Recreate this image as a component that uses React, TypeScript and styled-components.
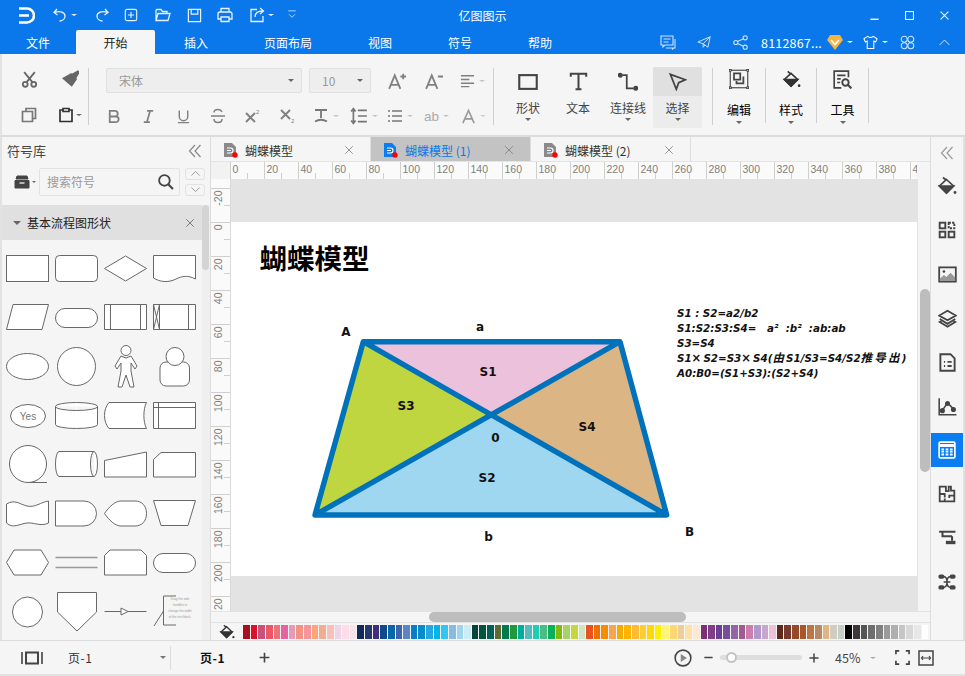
import * as React from "react"
import styled, { createGlobalStyle } from "styled-components"

const FONT = `"Noto Sans CJK SC", "Noto Sans", sans-serif`

const Global = createGlobalStyle`
  html, body { margin: 0; padding: 0; background: #f5f5f5; }
  body { font-family: ${FONT}; overflow: hidden; }
`

const Shell = styled.div`
  width: 965px;
  height: 676px;
  display: flex;
  flex-direction: column;
  overflow: hidden;
  background: #f5f5f5;
`

/* ---------- icons ---------- */

const Svg = styled.svg<{ $c?: string }>`
  display: block;
  flex: none;
  fill: none;
  stroke: ${p => p.$c || "currentColor"};
  color: ${p => p.$c || "currentColor"};
`

type IcoProps = { s?: number; c?: string; w?: number; children?: React.ReactNode }
const Ico = ({ s = 16, c, w = 1.3, children }: IcoProps) => (
  <Svg $c={c} width={s} height={s} viewBox="0 0 16 16" strokeWidth={w}>{children}</Svg>
)

const Caret = styled.span<{ $c?: string; $s?: number }>`
  display: block;
  flex: none;
  width: 0;
  height: 0;
  border-left: ${p => p.$s || 3.5}px solid transparent;
  border-right: ${p => p.$s || 3.5}px solid transparent;
  border-top: ${p => (p.$s || 3.5) * 0.9}px solid ${p => p.$c || "#666"};
`

const Logo = () => (
  <Svg width="16" height="17" viewBox="0 0 16 17" $c="#fff" strokeWidth={2.6}>
    <path d="M0 1.5H8A7 7 0 0 1 8 15.5H0M0 8.5H10" />
  </Svg>
)
const PaintBucket = ({ s = 20, c = "#444" }: { s?: number; c?: string }) => (
  <Svg width={s} height={s} viewBox="0 0 20 20" $c={c} strokeWidth={1.7}>
    <path d="M6 1.5L9 4M9.5 3.5L16.5 10L9.5 17L2.5 10Z" />
    <path d="M2.5 10H16.5L9.5 17Z" fill={c} />
    <circle cx="18" cy="16.5" r="1.4" fill={c} stroke="none" />
  </Svg>
)

/* ---------- title bar ---------- */

const TitleBar = styled.div`
  height: 30px;
  flex: none;
  background: #0a78ea;
  color: #fff;
  display: grid;
  grid-template-columns: 1fr auto 1fr;
  align-items: center;
`
const Quick = styled.div`
  display: flex;
  align-items: center;
  padding-left: 19px;
`
const QuickBtn = styled.span<{ $w: number }>`
  width: ${p => p.$w}px;
  flex: none;
  display: flex;
  align-items: center;
  justify-content: center;
  gap: 3px;
  opacity: 0.9;
`
const AppTitle = styled.div`
  font-size: 12px;
`
const WinBtns = styled.div`
  display: flex;
  justify-content: flex-end;
  align-items: center;
  padding-right: 3px;
`
const WinBtn = styled.span`
  width: 35px;
  display: flex;
  justify-content: center;
`

/* ---------- menu bar ---------- */

const MenuBar = styled.div`
  height: 24px;
  flex: none;
  background: #0a78ea;
  display: flex;
  align-items: stretch;
`
const MenuTab = styled.div<{ $w: number; $on?: boolean }>`
  width: ${p => p.$w}px;
  display: flex;
  align-items: center;
  justify-content: center;
  font-size: 12px;
  color: ${p => (p.$on ? "#222" : "#fff")};
  background: ${p => (p.$on ? "#f5f5f5" : "transparent")};
  border-radius: 2px 2px 0 0;
`
const MenuRight = styled.div`
  margin-left: auto;
  display: flex;
  align-items: center;
  color: #cfe4fb;
`
const MenuIcon = styled.span<{ $w: number }>`
  width: ${p => p.$w}px;
  display: flex;
  justify-content: center;
  align-items: center;
  gap: 4px;
`
const UserName = styled.span`
  font-size: 12.5px;
  color: #fff;
  width: 60px;
  margin-left: 3px;
  letter-spacing: 0.2px;
`

/* ---------- ribbon ---------- */

const Ribbon = styled.div`
  height: 83px;
  flex: none;
  box-sizing: border-box;
  background: #f5f5f5;
  border-left: 2px solid #e2e2e2;
  border-bottom: 2px solid #dcdcdc;
  display: flex;
  align-items: flex-start;
`
const Clip = styled.div`
  width: 86px;
  padding: 7px 0 0 6.5px;
  box-sizing: border-box;
  display: grid;
  grid-template-columns: 41px 41px;
  grid-auto-rows: 36px;
  color: #555;
`
const ClipCell = styled.div`
  display: flex;
  align-items: center;
  justify-content: center;
  gap: 2px;
`
const RibbonRule = styled.div<{ $h?: number }>`
  width: 1px;
  height: ${p => p.$h || 57}px;
  margin-top: 14px;
  background: #cfcfcf;
  flex: none;
`
const FontGroup = styled.div`
  width: 404px;
  padding-top: 14px;
  box-sizing: border-box;
  color: #808080;
`
const FontRow1 = styled.div`
  display: flex;
  align-items: center;
  height: 25px;
  padding-left: 17px;
`
const Select = styled.div<{ $w: number }>`
  width: ${p => p.$w}px;
  flex: none;
  height: 25px;
  box-sizing: border-box;
  margin-right: 7px;
  background: #eeeeee;
  border: 1px solid #e0e0e0;
  border-radius: 2px;
  display: flex;
  align-items: center;
  justify-content: space-between;
  padding: 0 7px 0 12px;
  font-size: 12px;
  color: #999;
`
const Cell = styled.span<{ $w: number }>`
  width: ${p => p.$w}px;
  flex: none;
  display: flex;
  align-items: center;
  justify-content: center;
  gap: 4px;
`
const FontRow2 = styled.div`
  display: flex;
  align-items: center;
  height: 30px;
  margin-top: 8px;
  padding-left: 6.5px;
  color: #808080;
`
const Ab = styled.span`
  font: 13.5px "Liberation Sans", sans-serif;
  color: #aaa;
`
const Tools = styled.div`
  display: flex;
  padding: 13px 10px 0 9px;
`
const Big = styled.div<{ $w?: number; $on?: boolean }>`
  width: ${p => p.$w || 50}px;
  height: 61px;
  display: flex;
  flex-direction: column;
  align-items: center;
  border-radius: 2px;
  background: ${p => (p.$on ? "#ececec" : "transparent")};
  overflow: hidden;
`
const BigIcon = styled.div<{ $on?: boolean }>`
  height: 29px;
  align-self: stretch;
  display: flex;
  align-items: center;
  justify-content: center;
  background: ${p => (p.$on ? "#e0e0e0" : "transparent")};
  color: #444;
`
const BigLabel = styled.div`
  margin-top: 3px;
  font-size: 12px;
  line-height: 17px;
  color: #444;
  white-space: nowrap;
`
const BigCaret = styled.div`
  margin-top: 2px;
`
const SmallTool = styled.div<{ $w: number }>`
  width: ${p => p.$w}px;
  padding-top: 13px;
  display: flex;
  flex-direction: column;
  align-items: center;
  color: #444;
`
const SmallIcon = styled.div`
  height: 24px;
  display: flex;
  align-items: center;
`
const SmallLabel = styled.div`
  margin-top: 10px;
  font-size: 12px;
  line-height: 17px;
  color: #000;
`
const SmallCaret = styled.div`
  margin-top: 3px;
`

/* ---------- main ---------- */

const Main = styled.div`
  flex: 1;
  min-height: 0;
  display: flex;
  border-left: 2px solid #e2e2e2;
`

/* left panel */
const Library = styled.aside`
  width: 208px;
  flex: none;
  display: flex;
  flex-direction: column;
  border-right: 1px solid #dcdcdc;
`
const LibHead = styled.div`
  height: 27px;
  display: flex;
  align-items: center;
  justify-content: space-between;
  padding: 0 7px 0 5px;
  font-size: 13px;
  color: #444;
`
const SearchRow = styled.div`
  display: flex;
  align-items: center;
  height: 29px;
  padding-left: 12px;
  margin-top: 3px;
`
const Drawer = styled.span`
  display: flex;
  align-items: center;
  gap: 2px;
  width: 25px;
`
const SearchBox = styled.div`
  width: 141px;
  height: 28px;
  box-sizing: border-box;
  border: 1px solid #e2e2e2;
  border-radius: 2px;
  display: flex;
  align-items: center;
  justify-content: space-between;
  padding: 0 5px 0 7px;
  font-size: 12px;
  color: #999;
`
const Spin = styled.div`
  margin-left: 5px;
  display: flex;
  flex-direction: column;
  gap: 4px;
`
const SpinBtn = styled.span`
  width: 20px;
  height: 12px;
  box-sizing: border-box;
  border: 1px solid #e2e2e2;
  border-radius: 3px;
  display: flex;
  align-items: center;
  justify-content: center;
`
const LibBody = styled.div`
  margin-top: 9px;
  flex: 1;
  min-height: 0;
  display: flex;
  overflow: hidden;
`
const LibList = styled.div`
  width: 200px;
  flex: none;
`
const SectionHead = styled.div`
  height: 35px;
  background: #e0e0e0;
  display: flex;
  align-items: center;
  padding: 0 7px 0 11px;
  gap: 6px;
  font-size: 12px;
  color: #222;
`
const CloseX = styled.span`
  margin-left: auto;
  display: flex;
`
const ShapeGrid = styled.div`
  margin: 3.5px 0 0 0.5px;
  display: grid;
  grid-template-columns: repeat(4, 49px);
  grid-auto-rows: 49px;
`
const ShapeSvg = styled.svg`
  display: block;
  fill: #fff;
  stroke: #686868;
  stroke-width: 1;
`
const LibTrack = styled.div`
  width: 8px;
  background: #efefef;
`
const LibThumb = styled.div`
  height: 65px;
  width: 7px;
  background: #d4d4d4;
  border-radius: 4px;
`

/* centre */
const Center = styled.section`
  flex: 1;
  min-width: 0;
  display: flex;
  flex-direction: column;
`
const DocTabs = styled.div`
  height: 25px;
  flex: none;
  display: flex;
  background: #f5f5f5;
`
const DocTab = styled.div<{ $on?: boolean }>`
  width: 159px;
  margin-right: 1px;
  box-sizing: border-box;
  padding: 1px 16px 0 12px;
  display: flex;
  align-items: center;
  gap: 7px;
  font-size: 12px;
  color: ${p => (p.$on ? "#0a78ea" : "#333")};
  background: ${p => (p.$on ? "#c3c3c3" : "#f5f5f5")};
  box-shadow: 1px 0 0 #dedede;
`
const RulerTop = styled.div`
  height: 17px;
  flex: none;
  display: flex;
  border-top: 1px solid #e4e4e4;
  margin-top: -1px;
`
const Corner = styled.div`
  width: 19px;
  flex: none;
  background: #f2f2f2;
`
const RulerSvg = styled.svg`
  display: block;
  background: #fafafa;
  flex: none;
`
const TopFill = styled.div`
  flex: 1;
  background: #f5f5f5;
`
const Work = styled.div`
  height: 432px;
  flex: none;
  display: flex;
`
const Canvas = styled.div`
  width: 687px;
  flex: none;
  background: #e3e3e3;
  padding-top: 43px;
  box-sizing: border-box;
  border-left: 1px solid #dadada;
`
const Page = styled.div`
  height: 354px;
  background: #fff;
  position: relative;
`
const PageTitle = styled.h1`
  position: absolute;
  left: 28.5px;
  top: 16px;
  margin: 0;
  font-size: 27.5px;
  line-height: 38px;
  font-weight: 700;
  color: #000;
`
const Diagram = styled.svg`
  position: absolute;
  left: 69px;
  top: 98px;
`
const DiagramText = styled.text`
  font: bold 12px "DejaVu Sans", ${FONT};
  fill: #111;
  text-anchor: middle;
  dominant-baseline: central;
`
const Formula = styled.div`
  position: absolute;
  left: 446px;
  top: 84px;
  font: italic bold 10.3px/15.1px "DejaVu Sans", "Noto Sans CJK SC", sans-serif;
  color: #111;
  white-space: pre;
`
const Wide = styled.span`
  font-size: 11.5px;
  line-height: 14px;
  letter-spacing: 2.2px;
`
const VScroll = styled.div`
  flex: 1;
  background: #f5f5f5;
  padding: 110px 0 0 2px;
  border-left: 1px solid #e2e2e2;
`
const VThumb = styled.div`
  width: 10px;
  height: 183px;
  border-radius: 5px;
  background: #bdbdbd;
`
const HScrollRow = styled.div`
  height: 12px;
  flex: none;
  box-sizing: border-box;
  display: flex;
  align-items: center;
  padding-left: 218px;
  background: #f5f5f5;
  border-top: 1px solid #e2e2e2;
  border-bottom: 1px solid #e2e2e2;
`
const HThumb = styled.div`
  width: 257px;
  height: 10px;
  flex: none;
  border-radius: 5px;
  background: #bdbdbd;
`
const Palette = styled.div`
  flex: 1;
  display: flex;
  align-items: center;
`
const PalIcon = styled.div`
  width: 32px;
  flex: none;
  display: flex;
  justify-content: center;
  color: #444;
`
const Swatches = styled.div`
  display: flex;
  gap: 1px;
`
const Swatch = styled.span<{ $c: string }>`
  display: block;
  width: 6.64px;
  flex: none;
  height: 14px;
  background: ${p => p.$c};
`

/* right rail */
const Rail = styled.aside`
  width: 32px;
  flex: none;
  border-left: 1px solid #dcdcdc;
  border-right: 2px solid #e2e2e2;
  display: flex;
  flex-direction: column;
  color: #444;
`
const RailTop = styled.div`
  height: 27px;
  box-sizing: border-box;
  display: flex;
  align-items: center;
  justify-content: center;
  padding-top: 4px;
`
const RailBtn = styled.div`
  height: 44px;
  display: flex;
  align-items: center;
  justify-content: center;
`
const RailOn = styled(RailBtn)`
  height: 34px;
  margin: 5px 0;
  background: #0a7df2;
  color: #fff;
`

/* status */
const Status = styled.footer`
  height: 36px;
  flex: none;
  box-sizing: border-box;
  border-top: 1px solid #dcdcdc;
  border-bottom: 2px solid #e2e2e2;
  display: flex;
  align-items: center;
  font-size: 12px;
  color: #333;
`
const PageIcon = styled.span`
  width: 68px;
  padding-left: 21px;
  box-sizing: border-box;
`
const PageName = styled.span`
  width: 92px;
  letter-spacing: 0.5px;
`
const StatusRule = styled.span`
  width: 1px;
  height: 24px;
  margin: 0 29px 0 4px;
  background: #dcdcdc;
`
const PageTab = styled.span`
  width: 57.5px;
  font-weight: 700;
  color: #111;
  letter-spacing: 0.5px;
`
const Zoom = styled.div`
  margin-left: auto;
  display: flex;
  align-items: center;
  padding-right: 31px;
  color: #444;
`
const PlayWrap = styled.span`
  margin-right: 4px;
`
const Slider = styled.span`
  width: 82px;
  height: 5px;
  border-radius: 3px;
  background: #dedede;
  display: flex;
  align-items: center;
  padding-left: 5.5px;
  box-sizing: border-box;
`
const Knob = styled.span`
  display: block;
  width: 11px;
  height: 11px;
  box-sizing: border-box;
  flex: none;
  background: #fff;
  border: 2px solid #c4c4c4;
  border-radius: 50%;
`
const Percent = styled.span`
  width: 44px;
  padding-left: 9px;
  box-sizing: border-box;
  font-size: 12.5px;
`
const ZoomCaret = styled.span`
  margin-right: 10px;
`

/* ---------- data ---------- */

const COLORS = [
  "#a90f1f", "#d9112b", "#c5547d", "#ea5766", "#ee7277", "#e8629f", "#e59ab8", "#f19285", "#f4949c", "#ffa47a", "#efad92", "#f7c0bb", "#ebd5e7", "#ffdce9", "#fce1e8",
  "#12295a", "#27386f", "#432d7a", "#0e4a8a", "#0767a8", "#3f64ae", "#5a86c4", "#0a7ecb", "#0a8ccb", "#2ba7df", "#00b4ef", "#35c5f5", "#8ab9e4", "#a0d5ef", "#cdebf5",
  "#05443a", "#00563a", "#006158", "#5c6b33", "#007a4d", "#22973f", "#00ae9c", "#54bcc0", "#1fcdb0", "#4bbd84", "#09b057", "#85b80f", "#a8d268", "#c4d643", "#cce6c5",
  "#e85320", "#f26f00", "#f68c00", "#f8a350", "#f5ab00", "#ffb400", "#ffbb33", "#fecd33", "#ffd800", "#fff000", "#fff47a", "#ffd670", "#ecce9b", "#ffdfa8", "#fde8d2",
  "#7b2f74", "#833d87", "#6a4096", "#754f9b", "#9367a5", "#a25b8c", "#cd7cae", "#ae98cc", "#c7a7cb", "#edc1d9",
  "#5e2a17", "#773a2c", "#94492a", "#a8572a", "#bc7642", "#b88965", "#dfb682", "#d2cbc2", "#c5cfc6",
  "#000000", "#3c3838", "#555555", "#6e6e6e", "#808080", "#9a9a9a", "#afafaf", "#c5c5c5", "#d8d8d8", "#e8e8e8", "#ffffff",
]

const SHAPES: React.ReactNode[] = [
  <rect x="3.5" y="11.5" width="42" height="26" />,
  <rect x="3.5" y="11.5" width="42" height="26" rx="4" />,
  <path d="M3.5 24.5L24.5 12L45.5 24.5L24.5 37Z" />,
  <path d="M3.5 11.5H45.5V35C38 31 32 32 26 35C18 39 10 38 3.5 34Z" />,

  <path d="M10 11.5H45.5L39 36.5H3.5Z" />,
  <rect x="3.5" y="15.5" width="42" height="19" rx="9.5" />,
  <path d="M3.5 11.5H45.5V36.5H3.5ZM9.5 11.5V36.5M39.5 11.5V36.5" />,
  <path d="M3.5 11.5H45.5V36.5H3.5ZM9.5 11.5V36.5M38.5 11.5V36.5M3.5 11.5L9.5 36.5M9.5 11.5L3.5 36.5" />,

  <ellipse cx="24.5" cy="24.5" rx="21" ry="13" />,
  <circle cx="24.5" cy="24.5" r="19" />,
  <path d="M20 14L14 24L16 27L20 21L20 29L17 45H21L25 33L29 45H33L30 29L30 21L34 27L36 24L30 14L25 16ZM25 13.5A5 5 0 1 0 25 3.5A5 5 0 1 0 25 13.5Z" />,
  <>
    <rect x="10" y="20" width="29.5" height="24" rx="6" />
    <circle cx="25" cy="14.5" r="9" />
  </>,

  <>
    <ellipse cx="25" cy="25" rx="17.5" ry="11.5" />
    <text x="25" y="29" fontSize="10" textAnchor="middle" fill="#777" stroke="none" fontFamily="Liberation Sans">Yes</text>
  </>,
  <path d="M3.5 15.5A21 4 0 0 1 45.5 15.5V33.5A21 4 0 0 1 3.5 33.5ZM3.5 15.5A21 4 0 0 0 45.5 15.5" />,
  <path d="M8 11.5H45.5C42 18 42 31 45.5 37.5H8C2 31 2 18 8 11.5Z" />,
  <path d="M3.5 11.5H45.5V37.5H3.5ZM3.5 16.5H45.5M8.5 11.5V37.5" />,

  <>
    <path d="M25 42.5H44" />
    <circle cx="25" cy="24" r="18.5" />
  </>,
  <path d="M7 11.5H42A3.5 12.5 0 0 1 42 36.5H7A3.5 12.5 0 0 1 7 11.5ZM42 11.5A3.5 12.5 0 0 0 42 36.5" />,
  <path d="M3.5 20.5L45.5 12V37H3.5Z" />,
  <path d="M11 12.5H45.5V37H3.5V19.5Z" />,

  <path d="M3.5 15C12 10 16 15 24 17C32 19 38 13 45.5 12V34C38 38 30 33 24 34C16 35 10 40 3.5 34Z" />,
  <path d="M3.5 12H32A12.5 12.5 0 0 1 32 37H3.5Z" />,
  <path d="M3.5 24.5C8 18 14 12 20 12H34C41 12 45.5 17 45.5 24.5C45.5 32 41 37 34 37H20C14 37 8 31 3.5 24.5Z" />,
  <path d="M3.5 11.5H45.5L38 36.5H11Z" />,

  <path d="M3.5 24.5L11 12H38L45.5 24.5L38 37H11Z" />,
  <path d="M3.5 19.5H45.5M3.5 29.5H45.5" stroke="#999" strokeWidth="1.4" />,
  <path d="M9 12H40L45.5 17.5V37H3.5V17.5Z" />,
  <rect x="3.5" y="15.5" width="42" height="19" rx="9.5" />,

  <circle cx="24.5" cy="25" r="15" />,
  <path d="M5.5 5.5H44.5V25L25 44L5.5 25Z" />,
  <path d="M3.5 24.5H20M27 24.5H45.5M20 21L27 24.5L20 28Z" />,
  <>
    <path d="M26 9H13.5V38H26M4 39L13.5 24" fill="none" />
    <g fontSize="3.1" textAnchor="middle" fill="#999" stroke="none" fontFamily="Liberation Sans">
      <text x="30" y="13">Drag the side</text>
      <text x="30" y="19">handles to</text>
      <text x="30" y="25">change the width</text>
      <text x="30" y="31">of the text block.</text>
    </g>
  </>,
]

const TopRuler = () => {
  const marks = Array.from({ length: 21 }, (_, i) => i)
  return (
    <RulerSvg width="687" height="17" viewBox="0 0 687 17">
      {marks.map(i => {
        const x = 0.5 + i * 34
        return (
          <g key={i}>
            <path d={`M${x} 0V17M${x + 17} 11V17`} stroke="#cfcfcf" fill="none" />
            <text x={x + 2} y="11" fontSize="10.5" fill="#808080" fontFamily="Liberation Sans">{i === 20 ? "4" : i * 20}</text>
          </g>
        )
      })}
    </RulerSvg>
  )
}

const SideRuler = () => {
  const marks = Array.from({ length: 12 }, (_, i) => i - 1)
  return (
    <RulerSvg width="19" height="432" viewBox="0 0 19 432">
      {marks.map(i => {
        const y = 43.5 + i * 34
        return (
          <g key={i}>
            <path d={`M0 ${y}H19M13 ${y + 17}H19`} stroke="#cfcfcf" fill="none" />
            <text
              transform={`translate(11 ${y + 2}) rotate(-90)`}
              textAnchor="end"
              fontSize="10.5"
              fill="#808080"
              fontFamily="Liberation Sans"
            >{i * 20}</text>
          </g>
        )
      })}
      <path d="M0 417.5H19" stroke="#cfcfcf" fill="none" />
      <text transform="translate(11 431) rotate(-90)" fontSize="10.5" fill="#808080" fontFamily="Liberation Sans">20</text>
    </RulerSvg>
  )
}

const DocIcon = ({ blue }: { blue?: boolean }) => (
  <svg width="15" height="15" viewBox="0 0 15 15" style={{ display: "block", flex: "none" }}>
    <path d="M1 0H9L13 4V14H1Z" fill={blue ? "#0a7df2" : "#8a8a8a"} />
    <path d="M4 5H7.5A2.5 2.5 0 0 1 7.5 10H4M4 7.5H8" stroke="#fff" strokeWidth="1.1" fill="none" />
    <circle cx="12" cy="12" r="2.7" fill="#f00" />
  </svg>
)

const Chevrons = ({ c = "#888" }: { c?: string }) => (
  <Ico s={16} c={c} w={1.2}>
    <path d="M8 2L2.5 8L8 14M13.5 2L8 8L13.5 14" />
  </Ico>
)

const Diag = () => (
  <Diagram width="400" height="230" viewBox="300 320 400 230">
    <path d="M363.3 341.7H620L491.3 414.8Z" fill="#ebc1dc" />
    <path d="M363.3 341.7L491.3 414.8L315 515Z" fill="#bfd641" />
    <path d="M620 341.7L666.7 515L491.3 414.8Z" fill="#dcb584" />
    <path d="M315 515H666.7L491.3 414.8Z" fill="#9fd6f0" />
    <path
      d="M363.3 341.7H620L666.7 515H315ZM363.3 341.7L666.7 515M620 341.7L315 515"
      fill="none"
      stroke="#0072bc"
      strokeWidth="5.4"
      strokeLinejoin="round"
    />
    <DiagramText x="346" y="332">A</DiagramText>
    <DiagramText x="480" y="327">a</DiagramText>
    <DiagramText x="488" y="371.5">S1</DiagramText>
    <DiagramText x="406" y="405.5">S3</DiagramText>
    <DiagramText x="495.5" y="438">0</DiagramText>
    <DiagramText x="587" y="427">S4</DiagramText>
    <DiagramText x="487" y="477.5">S2</DiagramText>
    <DiagramText x="488.5" y="537">b</DiagramText>
    <DiagramText x="689.5" y="532">B</DiagramText>
  </Diagram>
)

export default function App() {
  return (
    <Shell>
      <Global />
      <TitleBar>
        <Quick>
          <Logo />
          <QuickBtn $w={59}>
            <Ico c="#fff"><path d="M5 2L2 5.5L5.5 8M2.5 5.5C8 3.5 13 5.5 13 9C13 12 10.5 14 7.5 14" /></Ico>
            <Caret $c="#fff" $s={3} />
          </QuickBtn>
          <QuickBtn $w={16}>
            <Ico c="#fff"><path d="M11 2L14 5.5L10.5 8M13.5 5.5C8 3.5 3 5.5 3 9C3 12 5.5 14 8.5 14" /></Ico>
          </QuickBtn>
          <QuickBtn $w={42}>
            <Ico s={14} c="#fff"><rect x="1.5" y="1.5" width="13" height="13" rx="2" /><path d="M8 4.5V11.5M4.5 8H11.5" /></Ico>
          </QuickBtn>
          <QuickBtn $w={22}>
            <Ico c="#fff"><path d="M1 13.5V3.5Q1 2.5 2 2.5H6L7.5 4.5H12V6.5M1 13.5H13L15 6.5H3Z" /></Ico>
          </QuickBtn>
          <QuickBtn $w={40}>
            <Ico s={15} c="#fff"><path d="M1.5 1.5H14.5V14.5H1.5ZM4.5 1.5V6.5H11.5V1.5" /></Ico>
          </QuickBtn>
          <QuickBtn $w={22}>
            <Ico c="#fff"><path d="M4 5V1.5H12V5M4 12H1V7Q1 5 3 5H13Q15 5 15 7V12H12M4 10H12V14.5H4Z" /></Ico>
          </QuickBtn>
          <QuickBtn $w={50}>
            <Ico c="#fff"><path d="M8 2.5H2V14.5H14V9M6 10C6 6 9 4 14 4M11 1L14.5 4L11 7" /></Ico>
            <Caret $c="#fff" $s={3} />
          </QuickBtn>
          <QuickBtn $w={12}>
            <Ico s={12} c="#fff" w={1}><path d="M3 2.5H13M4 7L8 11L12 7" /></Ico>
          </QuickBtn>
        </Quick>
        <AppTitle>亿图图示</AppTitle>
        <WinBtns>
          <WinBtn><Ico s={11} c="#fff" w={2}><path d="M2 13.5H14" /></Ico></WinBtn>
          <WinBtn><Ico s={9} c="#fff" w={1.8}><rect x="1" y="1" width="14" height="14" /></Ico></WinBtn>
          <WinBtn><Ico s={9} c="#fff" w={1.8}><path d="M1 1L15 15M15 1L1 15" /></Ico></WinBtn>
        </WinBtns>
      </TitleBar>

      <MenuBar>
        <MenuTab $w={76}>文件</MenuTab>
        <MenuTab $w={79} $on>开始</MenuTab>
        <MenuTab $w={82}>插入</MenuTab>
        <MenuTab $w={102}>页面布局</MenuTab>
        <MenuTab $w={82}>视图</MenuTab>
        <MenuTab $w={78}>符号</MenuTab>
        <MenuTab $w={82}>帮助</MenuTab>
        <MenuRight>
          <MenuIcon $w={36}>
            <Ico s={16} c="#cfe4fb" w={1.1}><path d="M1 2H13V11H5L3 13V11H1ZM15 5V14H13.5L12.5 15V14H6M3.5 5H10.5M3.5 8H8.5" /></Ico>
          </MenuIcon>
          <MenuIcon $w={36}>
            <Ico s={14} c="#cfe4fb" w={1.1}><path d="M1 8L15 2L12.5 14L7 10ZM15 2L7 10V14L9 11.5" /></Ico>
          </MenuIcon>
          <MenuIcon $w={36}>
            <Ico s={15} c="#cfe4fb" w={1.1}>
              <circle cx="3" cy="8" r="2.2" /><circle cx="13" cy="3" r="2.2" /><circle cx="13" cy="13" r="2.2" />
              <path d="M5 7L11 4M5 9L11 12" />
            </Ico>
          </MenuIcon>
          <UserName>8112867...</UserName>
          <MenuIcon $w={38}>
            <svg width="16" height="16" viewBox="0 0 16 16" style={{ display: "block" }}>
              <path d="M3 1H13L16 6L8 16L0 6Z" fill="#f5b342" />
              <path d="M4 6L8 10.5L12 6" stroke="#fff" strokeWidth="1.6" fill="none" />
            </svg>
            <Caret $c="#fff" $s={3} />
          </MenuIcon>
          <MenuIcon $w={32}>
            <Ico s={15} c="#fff" w={1.1}><path d="M5 1.5L1 4L2.5 7.5L4.5 6.5V14.5H11.5V6.5L13.5 7.5L15 4L11 1.5Q8 4 5 1.5Z" /></Ico>
            <Caret $c="#fff" $s={3} />
          </MenuIcon>
          <MenuIcon $w={32}>
            <Ico s={15} c="#cfe4fb" w={1.1}>
              <circle cx="4.5" cy="4.5" r="3.2" /><circle cx="11.5" cy="4.5" r="3.2" />
              <circle cx="4.5" cy="11.5" r="3.2" /><circle cx="11.5" cy="11.5" r="3.2" />
            </Ico>
          </MenuIcon>
          <MenuIcon $w={42}>
            <Ico s={13} c="#dcecfc" w={1.2}><path d="M2 11L8 5L14 11" /></Ico>
          </MenuIcon>
        </MenuRight>
      </MenuBar>

      <Ribbon>
        <Clip>
          <ClipCell>
            <Ico s={17} c="#666" w={1.7}>
              <circle cx="4" cy="12.5" r="2.3" /><circle cx="12" cy="12.5" r="2.3" />
              <path d="M3 1L10.7 10.5M13 1L5.3 10.5" />
            </Ico>
          </ClipCell>
          <ClipCell>
            <Ico s={18} c="#666" w={1.3}>
              <path d="M10 4L15 1L16 2L13 7ZM9 3.5L13.5 8L9.5 14L2 7.5Z" fill="#666" />
            </Ico>
          </ClipCell>
          <ClipCell>
            <Ico s={16} c="#777" w={1.7}><path d="M5 4.5V1.5H14.5V11.5H11.5M1.5 4.5H11.5V14.5H1.5Z" /></Ico>
          </ClipCell>
          <ClipCell>
            <Ico s={16} c="#333" w={1.7}><path d="M5 3H2V14.5H14V3H11M5 1.5H11V4.5H5Z" /></Ico>
            <Caret $c="#666" $s={3} />
          </ClipCell>
        </Clip>
        <RibbonRule />
        <FontGroup>
          <FontRow1>
            <Select $w={196}>宋体<Caret $s={3.5} /></Select>
            <Select $w={62}>10<Caret $s={3.5} /></Select>
            <Cell $w={38}><Ico s={18} c="#808080" w={1.6}><path d="M1 15L6 3L11 15M2.5 11.5H9.5M11 4H16M13.5 1.5V6.5" /></Ico></Cell>
            <Cell $w={36}><Ico s={18} c="#808080" w={1.6}><path d="M1 15L6 3L11 15M2.5 11.5H9.5M11.5 4H16" /></Ico></Cell>
            <Cell $w={40}>
              <Ico s={15} c="#808080" w={1.5}><path d="M1 3H15M1 7H10M1 11H15M1 14.5H10" /></Ico>
              <Caret $c="#c4c4c4" $s={3} />
            </Cell>
          </FontRow1>
          <FontRow2>
            <Cell $w={35}><Ico s={15} c="#808080" w={1.9}><path d="M4 2H9.5A3 3 0 0 1 9.5 8H4ZM4 8H10.5A3 3 0 0 1 10.5 14H4Z" /></Ico></Cell>
            <Cell $w={35}><Ico s={15} c="#808080" w={1.9}><path d="M6.5 2H13M3 14H9.5M9.7 2L6.3 14" /></Ico></Cell>
            <Cell $w={35}><Ico s={15} c="#808080" w={1.5}><path d="M3.5 1.5V8A4.5 4.5 0 0 0 12.5 8V1.5M2 14.5H14" /></Ico></Cell>
            <Cell $w={35}><Ico s={16} c="#808080" w={1.5}><path d="M12 4C11 2 9.5 1.5 8 1.5C6 1.5 4 2.5 4 4.5M1 8H15M4 11C4 13.5 6 14.5 8 14.5C10 14.5 12 13.5 12 11" /></Ico></Cell>
            <Cell $w={35}>
              <Ico s={16} c="#808080" w={1.9}>
                <path d="M1 5L10 14M10 5L1 14" />
                <text x="11" y="6" fontSize="6" stroke="none" fill="#808080" fontFamily="Liberation Sans">2</text>
              </Ico>
            </Cell>
            <Cell $w={35}>
              <Ico s={16} c="#808080" w={1.9}>
                <path d="M1 2L10 11M10 2L1 11" />
                <text x="11" y="15" fontSize="6" stroke="none" fill="#808080" fontFamily="Liberation Sans">2</text>
              </Ico>
            </Cell>
            <Cell $w={40}>
              <Ico s={16} c="#777" w={1.8}><path d="M2 2H14M8 2V10M2 13.5Q8 10 14 13.5" /></Ico>
              <Caret $c="#c4c4c4" $s={3} />
            </Cell>
            <Cell $w={36}>
              <Ico s={18} c="#777" w={1.5}><path d="M3 2V14M1 4L3 1.5L5 4M1 12L3 14.5L5 12M7 3H15M7 8H15M7 13H15" /></Ico>
              <Caret $c="#c4c4c4" $s={3} />
            </Cell>
            <Cell $w={37}>
              <Ico s={16} c="#777" w={1.6}><path d="M1 3H3M5 3H15M1 8H3M5 8H15M1 13H3M5 13H15" /></Ico>
              <Caret $c="#c4c4c4" $s={3} />
            </Cell>
            <Cell $w={36}><Ab>ab</Ab><Caret $c="#c4c4c4" $s={3} /></Cell>
            <Cell $w={38}>
              <Ico s={15} c="#999" w={1.7}><path d="M2 15L8 1.5L14 15M4 10.5H12" /></Ico>
              <Caret $c="#d0d0d0" $s={3} />
            </Cell>
          </FontRow2>
        </FontGroup>
        <RibbonRule />
        <Tools>
          <Big>
            <BigIcon><Ico s={20} c="#444" w={1.7}><rect x="1" y="2.5" width="14" height="11" /></Ico></BigIcon>
            <BigLabel>形状</BigLabel>
            <BigCaret><Caret $c="#666" $s={3.5} /></BigCaret>
          </Big>
          <Big>
            <BigIcon><Ico s={19} c="#444" w={1.7}><path d="M1.5 4V1.5H14.5V4M8 1.5V14.5M5.5 14.5H10.5" /></Ico></BigIcon>
            <BigLabel>文本</BigLabel>
          </Big>
          <Big>
            <BigIcon>
              <Ico s={20} c="#444" w={1.4}>
                <circle cx="1.8" cy="2.5" r="1.3" fill="#444" />
                <circle cx="14.2" cy="13" r="1.3" fill="#444" />
                <path d="M3.5 2.5H7V13H12.5" />
              </Ico>
            </BigIcon>
            <BigLabel>连接线</BigLabel>
            <BigCaret><Caret $c="#666" $s={3.5} /></BigCaret>
          </Big>
          <Big $w={49} $on>
            <BigIcon $on><Ico s={19} c="#444" w={1.5}><path d="M2 2L14.5 6.5L9 9L7 14.5Z" /></Ico></BigIcon>
            <BigLabel>选择</BigLabel>
            <BigCaret><Caret $c="#666" $s={3.5} /></BigCaret>
          </Big>
        </Tools>
        <RibbonRule />
        <SmallTool $w={52}>
          <SmallIcon>
            <Ico s={20} c="#444" w={0.9}>
              <rect x="1" y="1" width="14" height="14" />
              <g fill="#f5f5f5"><circle cx="1" cy="1" r=".9" /><circle cx="15" cy="1" r=".9" /><circle cx="1" cy="15" r=".9" /><circle cx="15" cy="15" r=".9" /></g>
              <path d="M4 3.5H9V8.5H4ZM11.5 6V11.5H6V9.5" strokeWidth="1.4" />
            </Ico>
          </SmallIcon>
          <SmallLabel>编辑</SmallLabel>
          <SmallCaret><Caret $c="#666" $s={3.5} /></SmallCaret>
        </SmallTool>
        <RibbonRule $h={55} />
        <SmallTool $w={50}>
          <SmallIcon><PaintBucket s={19} c="#333" /></SmallIcon>
          <SmallLabel>样式</SmallLabel>
          <SmallCaret><Caret $c="#666" $s={3.5} /></SmallCaret>
        </SmallTool>
        <RibbonRule $h={55} />
        <SmallTool $w={51}>
          <SmallIcon>
            <Ico s={19} c="#444" w={1.4}>
              <path d="M13 6V1H1V15H7M3.5 4.5H10.5M3.5 7.5H6.5M3.5 10.5H6" />
              <circle cx="10.5" cy="10.5" r="2.7" strokeWidth="1.6" />
              <path d="M12.5 12.5L15.5 15.5" strokeWidth="1.8" />
            </Ico>
          </SmallIcon>
          <SmallLabel>工具</SmallLabel>
          <SmallCaret><Caret $c="#666" $s={3.5} /></SmallCaret>
        </SmallTool>
        <RibbonRule $h={55} />
      </Ribbon>

      <Main>
        <Library>
          <LibHead>
            符号库
            <Chevrons />
          </LibHead>
          <SearchRow>
            <Drawer>
              <Ico s={16} c="#444" w={1}>
                <path d="M3 2H13L14 5H2Z" fill="#444" />
                <path d="M1 6.5H15V14H1Z" fill="#444" />
                <path d="M5.5 9H10.5" stroke="#f5f5f5" strokeWidth="1.3" />
              </Ico>
              <Caret $c="#666" $s={2.5} />
            </Drawer>
            <SearchBox>
              搜索符号
              <Ico s={17} c="#444" w={1.7}><circle cx="7" cy="7" r="5" /><path d="M10.5 10.5L15 15" strokeWidth="2" /></Ico>
            </SearchBox>
            <Spin>
              <SpinBtn><Ico s={11} c="#777" w={1}><path d="M2 11L8 5L14 11" /></Ico></SpinBtn>
              <SpinBtn><Ico s={11} c="#777" w={1}><path d="M2 5L8 11L14 5" /></Ico></SpinBtn>
            </Spin>
          </SearchRow>
          <LibBody>
            <LibList>
              <SectionHead>
                <Caret $c="#666" $s={4.5} />
                基本流程图形状
                <CloseX><Ico s={10} c="#777" w={1.5}><path d="M2 2L14 14M14 2L2 14" /></Ico></CloseX>
              </SectionHead>
              <ShapeGrid>
                {SHAPES.map((shape, i) => (
                  <ShapeSvg key={i} width="49" height="49" viewBox="0 0 49 49">{shape}</ShapeSvg>
                ))}
              </ShapeGrid>
            </LibList>
            <LibTrack><LibThumb /></LibTrack>
          </LibBody>
        </Library>

        <Center>
          <DocTabs>
            <DocTab><DocIcon />蝴蝶模型<CloseX><Ico s={10} c="#777" w={1.2}><path d="M2 2L14 14M14 2L2 14" /></Ico></CloseX></DocTab>
            <DocTab $on><DocIcon blue />蝴蝶模型 (1)<CloseX><Ico s={10} c="#777" w={1.2}><path d="M2 2L14 14M14 2L2 14" /></Ico></CloseX></DocTab>
            <DocTab><DocIcon />蝴蝶模型 (2)<CloseX><Ico s={10} c="#777" w={1.2}><path d="M2 2L14 14M14 2L2 14" /></Ico></CloseX></DocTab>
          </DocTabs>
          <RulerTop>
            <Corner />
            <TopRuler />
            <TopFill />
          </RulerTop>
          <Work>
            <SideRuler />
            <Canvas>
              <Page>
                <PageTitle>蝴蝶模型</PageTitle>
                <Diag />
                <Formula>
                  {"S1 : S2=a2/b2\nS1:S2:S3:S4=   a²  :b²  :ab:ab\nS3=S4\nS1"}
                  <Wide>×</Wide>S2=S3<Wide>×</Wide>S4(<Wide>由</Wide>S1/S3=S4/S2<Wide>推导出</Wide>)
                  {"\nA0:B0=(S1+S3):(S2+S4)"}
                </Formula>
              </Page>
            </Canvas>
            <VScroll><VThumb /></VScroll>
          </Work>
          <HScrollRow><HThumb /></HScrollRow>
          <Palette>
            <PalIcon><PaintBucket s={16} c="#333" /></PalIcon>
            <Swatches>
              {COLORS.map((c, i) => <Swatch key={i} $c={c} />)}
            </Swatches>
          </Palette>
        </Center>

        <Rail>
          <RailTop><Chevrons c="#999" /></RailTop>
          <RailBtn><PaintBucket s={20} c="#444" /></RailBtn>
          <RailBtn>
            <Ico s={18} c="#444" w={1.7}>
              <rect x="1.5" y="1.5" width="5" height="5" /><rect x="9.5" y="1.5" width="5" height="5" strokeDasharray="2 1" />
              <rect x="1.5" y="9.5" width="5" height="5" /><rect x="9.5" y="9.5" width="5" height="5" />
            </Ico>
          </RailBtn>
          <RailBtn>
            <Ico s={19} c="#444" w={1.5}>
              <rect x="1" y="2" width="14" height="12" />
              <circle cx="5" cy="5.5" r="1.1" fill="#444" stroke="none" />
              <path d="M1.5 13.5V11.5L5 8.5L7 10L10.5 6.5L14.5 10.5V13.5Z" fill="#999" stroke="none" />
            </Ico>
          </RailBtn>
          <RailBtn>
            <Ico s={19} c="#444" w={1.5}><path d="M8 1.5L15 5.5L8 9.5L1 5.5ZM1.5 8.5L8 12.5L14.5 8.5M3 10.5L1.5 11L8 15L14.5 11L13 10.5" /></Ico>
          </RailBtn>
          <RailBtn>
            <Ico s={19} c="#444" w={1.6}><path d="M2 1H10.5L14 4.5V15H2ZM5 7.5H6M8 7.5H11.5M5 11H6M8 11H11.5" /></Ico>
          </RailBtn>
          <RailBtn>
            <Ico s={19} c="#444" w={1.3}>
              <path d="M1 1V15H15.5M3.5 11.5L8 5L13 10" />
              <circle cx="3.7" cy="11.5" r="1.5" fill="#444" /><circle cx="8" cy="5.5" r="1.5" fill="#444" /><circle cx="13" cy="10.5" r="1.5" fill="#444" />
            </Ico>
          </RailBtn>
          <RailOn>
            <Ico s={18} c="#fff" w={1.5}>
              <rect x="1" y="1" width="14" height="14" rx="1" />
              <path d="M1 4H15" strokeWidth="2.6" />
              <path d="M3 7.5H13M3 9.5H13M3 12H13" strokeDasharray="2.4 1.4" strokeWidth="1.6" />
            </Ico>
          </RailOn>
          <RailBtn>
            <Ico s={18} c="#444" w={1.6}><path d="M1.5 1.5H7V5.5H9.5V1.5H11.5V5H14.5V14.5H1.5ZM1.5 8H6V11M14.5 9.5H10V11.5M6 14.5V12" /></Ico>
          </RailBtn>
          <RailBtn>
            <Ico s={18} c="#444" w={1.8}>
              <path d="M1 2.5H15.5M4 2.5V6.5H12.5M12.5 6.5V10.5" />
              <path d="M7 10.5H15.5V13.5H7Z" fill="#444" stroke="none" />
            </Ico>
          </RailBtn>
          <RailBtn>
            <Ico s={18} c="#444" w={1.3}>
              <rect x="1" y="2" width="4" height="2.4" rx="1" fill="#444" /><rect x="11" y="2" width="4" height="2.4" rx="1" fill="#444" />
              <rect x="1" y="11.6" width="4" height="2.4" rx="1" fill="#444" /><rect x="11" y="11.6" width="4" height="2.4" rx="1" fill="#444" />
              <path d="M5 3.2Q8 3.5 8 8Q8 12.5 5 12.8M11 3.2Q8 3.5 8 8Q8 12.5 11 12.8M5 8H11" />
            </Ico>
          </RailBtn>
        </Rail>
      </Main>

      <Status>
        <PageIcon>
          <Svg width="22" height="14" viewBox="0 0 22 14" $c="#444" strokeWidth={1.6}>
            <path d="M1 1V13M21 1V13" />
            <rect x="5" y="1.5" width="12" height="11" strokeWidth="2" />
          </Svg>
        </PageIcon>
        <PageName>页-1</PageName>
        <Caret $c="#777" $s={3.5} />
        <StatusRule />
        <PageTab>页-1</PageTab>
        <Ico s={13} c="#444" w={2}><path d="M8 2V14M2 8H14" /></Ico>
        <Zoom>
          <PlayWrap>
            <Ico s={18} c="#444" w={1.4}><circle cx="8" cy="8" r="7" /><path d="M6 4.5L11.5 8L6 11.5Z" fill="#888" stroke="none" /></Ico>
          </PlayWrap>
          <Cell $w={24}><Ico s={11} c="#444" w={2.2}><path d="M2 8H14" /></Ico></Cell>
          <Slider><Knob /></Slider>
          <Cell $w={24}><Ico s={12} c="#444" w={2}><path d="M8 2V14M2 8H14" /></Ico></Cell>
          <Percent>45%</Percent>
          <ZoomCaret><Caret $c="#aaa" $s={3} /></ZoomCaret>
          <Cell $w={32}><Ico s={15} c="#444" w={1.8}><path d="M1 4.5V1H4.5M11.5 1H15V4.5M15 11.5V15H11.5M4.5 15H1V11.5" /></Ico></Cell>
          <Ico s={16} c="#444" w={1.5}>
            <rect x="1" y="1" width="14" height="14" />
            <path d="M3.5 8H12.5M5 6L3.5 8L5 10M11 6L12.5 8L11 10" strokeWidth="1.2" />
          </Ico>
        </Zoom>
      </Status>
    </Shell>
  )
}
